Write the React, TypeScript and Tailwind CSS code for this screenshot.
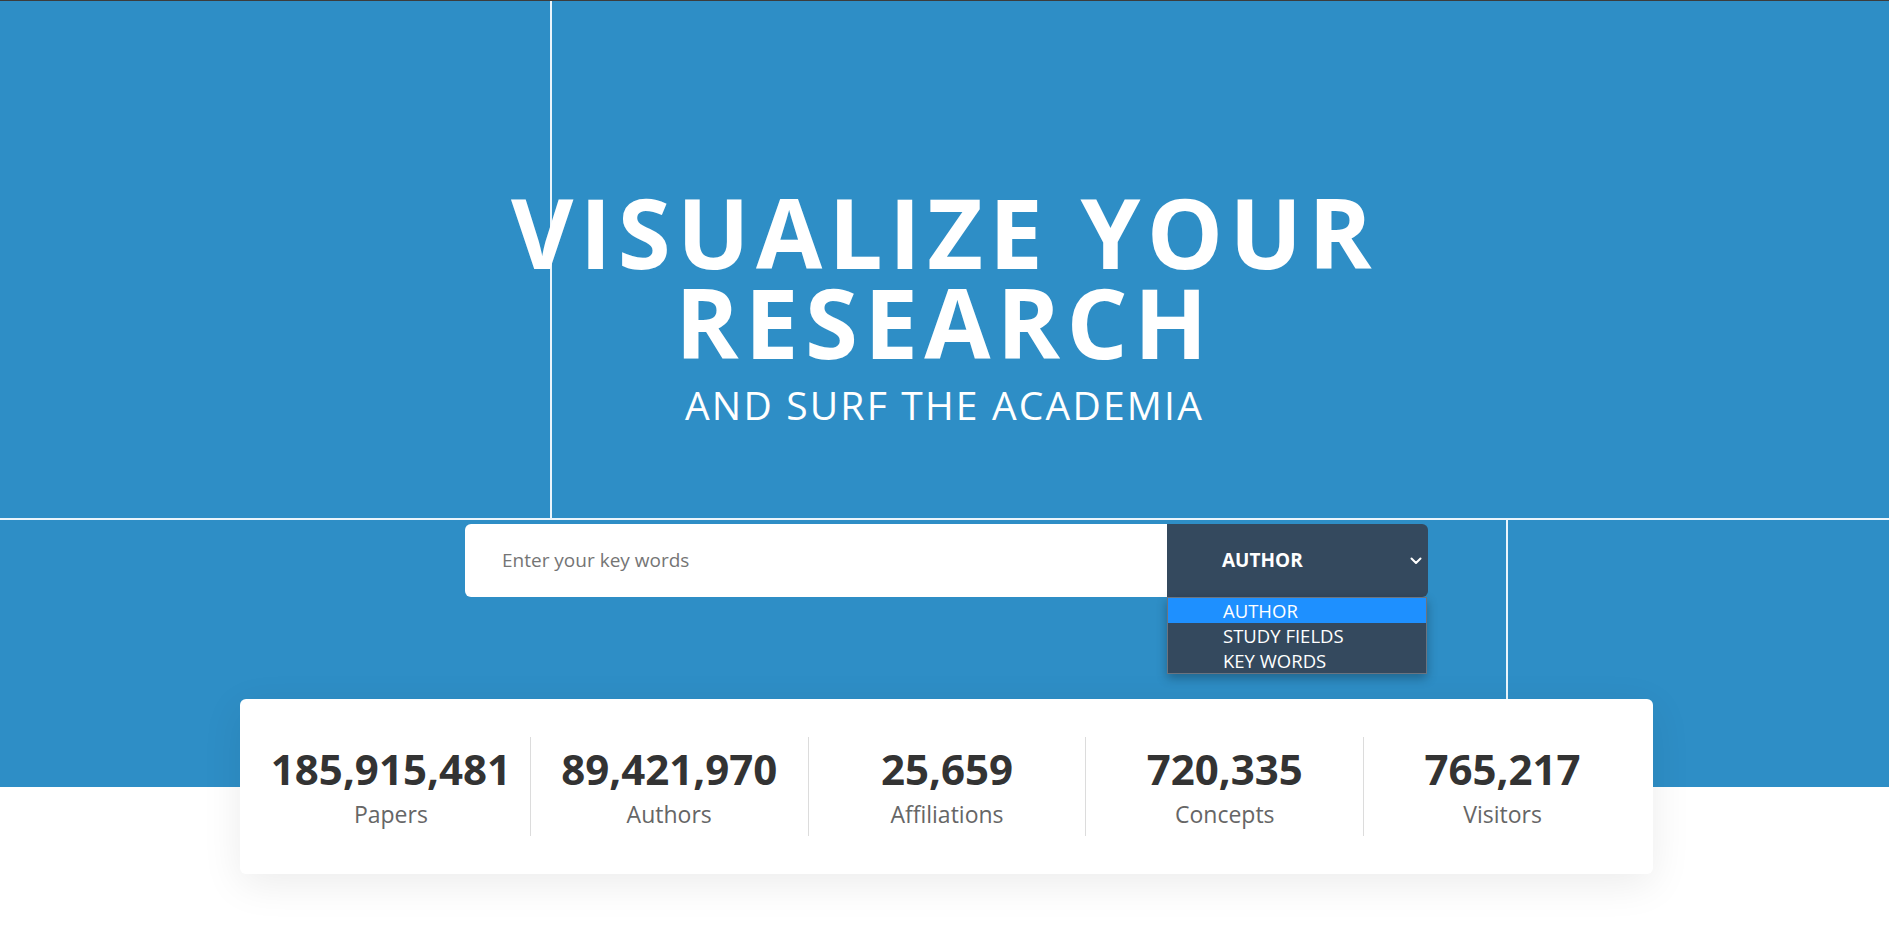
import React from 'react';

const STATS = [
  { value: '185,915,481', label: 'Papers' },
  { value: '89,421,970', label: 'Authors' },
  { value: '25,659', label: 'Affiliations' },
  { value: '720,335', label: 'Concepts' },
  { value: '765,217', label: 'Visitors' },
];

const OPTIONS = ['AUTHOR', 'STUDY FIELDS', 'KEY WORDS'];

const Chevron = () => (
  <svg width="12" height="8" viewBox="0 0 12 8" fill="none">
    <polyline points="1.5,1.5 6,6 10.5,1.5" stroke="#ffffff" strokeWidth="2" strokeLinecap="round" strokeLinejoin="round" />
  </svg>
);

const SearchBar = () => {
  return (
    <div className="mx-auto flex w-[963px] h-[73px] mt-[95px] translate-x-[2px]">
      <div className="flex-1 bg-white rounded-l-[6px] flex items-center pl-[37px]">
        <span className="text-[19px] text-[#757575]">Enter your key words</span>
      </div>
      <div className="relative w-[261px] bg-[#34495e] rounded-r-[6px] flex items-center pl-[55px] pr-[6px]">
        <span className="flex-1 text-[19px] font-bold text-white">AUTHOR</span>
        <Chevron />
        <ul className="absolute left-0 top-full w-[260px] bg-[#34495e] border border-[#6b7480] shadow-[0_4px_10px_rgba(0,0,0,0.3)] z-20">
          {OPTIONS.map((opt, i) => (
            <li
              key={opt}
              className={`h-[25px] leading-[25px] pl-[55px] text-[18.5px] text-white ${i === 0 ? 'bg-[#1e90ff]' : ''}`}
            >
              {opt}
            </li>
          ))}
        </ul>
      </div>
    </div>
  );
};

const Stats = () => {
  return (
    <div className="relative z-10 mx-auto -mt-[88px] translate-x-[2px] w-[1413px] bg-white rounded-[6px] shadow-[0_10px_40px_rgba(0,0,0,0.08)] px-3 py-[38px] grid grid-cols-5">
      {STATS.map((s, i) => (
        <div
          key={s.label}
          className={`h-[99px] flex flex-col items-center justify-center ${i > 0 ? 'border-l border-[#dcdcdc]' : ''}`}
        >
          <div className="text-[42px] leading-[50px] font-bold text-[#333333] mb-[4px]">{s.value}</div>
          <div className="text-[23px] leading-[32px] text-[#666666]">{s.label}</div>
        </div>
      ))}
    </div>
  );
};

export default function App() {
  return (
    <div className="min-h-screen bg-white border-t border-[#3c3c3c] font-['Open_Sans',sans-serif]">
      <section className="relative h-[786px] bg-[#2e8ec6] pt-[186px]">
        {/* decorative grid lines */}
        <div className="absolute left-[550px] top-0 w-[2px] h-[518px] bg-[#eaf5fc]" />
        <div className="absolute left-0 top-[517px] w-full h-[2px] bg-[#eaf5fc]" />
        <div className="absolute left-[1506px] top-[519px] w-[2px] h-[270px] bg-[#eaf5fc]" />

        <div className="relative text-center text-white">
          <h1 className="text-[96px] leading-[90px] font-bold tracking-[0.066em] uppercase">
            Visualize your
            <br />
            research
          </h1>
          <p className="mt-[14px] text-[39px] leading-[48px] tracking-[0.056em] uppercase">
            And surf the academia
          </p>
        </div>

        <div className="relative z-20">
          <SearchBar />
        </div>
      </section>

      <Stats />
    </div>
  );
}
